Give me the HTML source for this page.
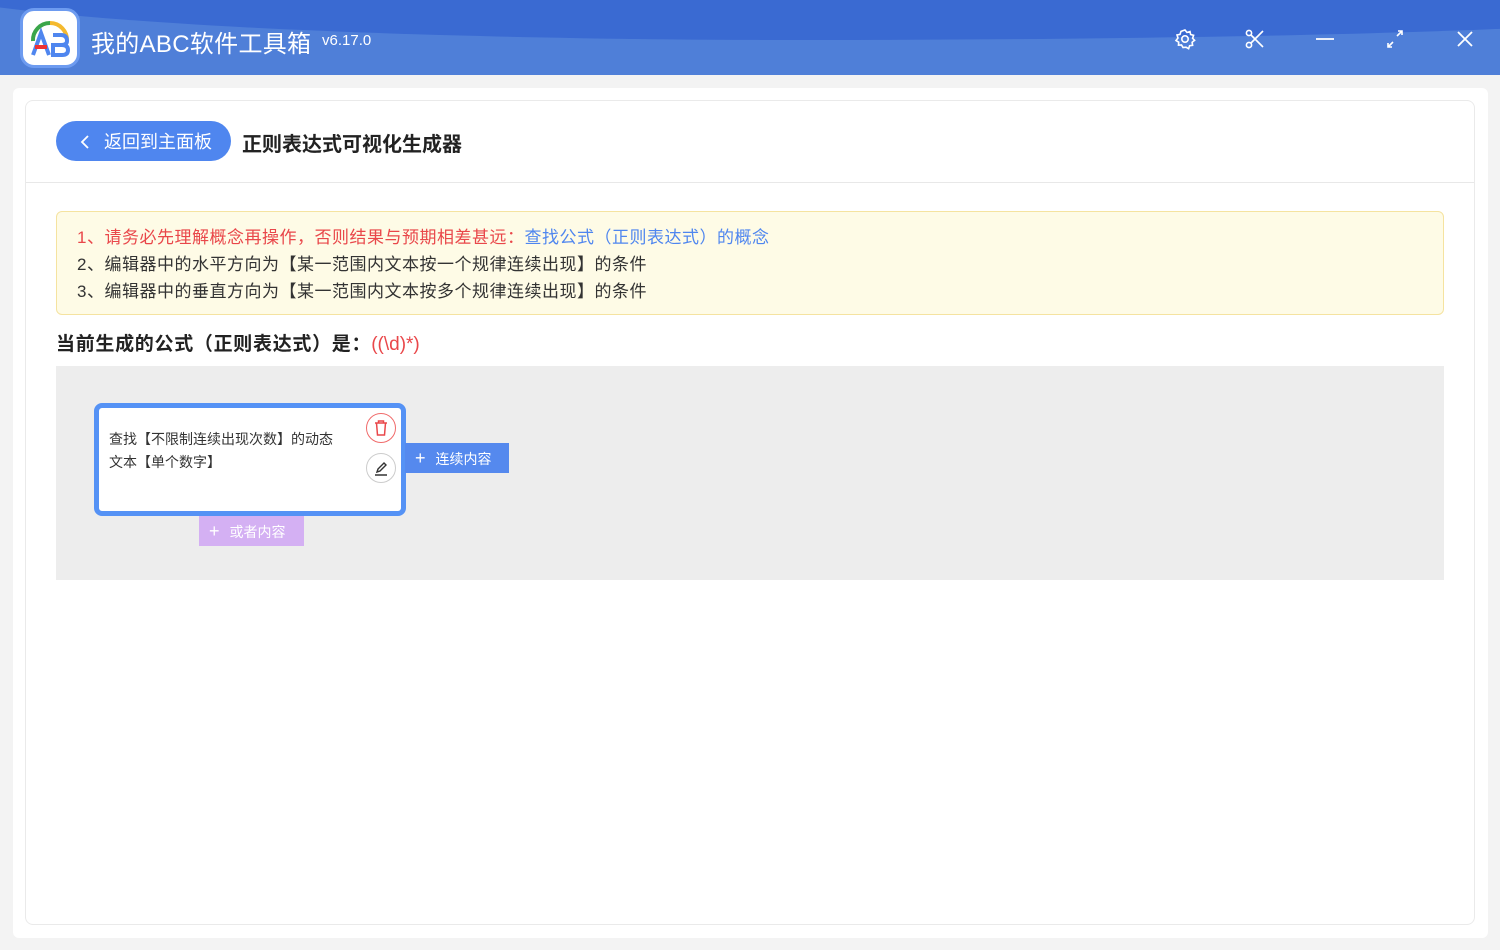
<!DOCTYPE html>
<html><head><meta charset="utf-8"><style>
*{margin:0;padding:0;box-sizing:border-box}
body{width:1500px;height:950px;background:#f3f3f3;font-family:"Liberation Sans","Noto Sans CJK SC",sans-serif;position:relative;overflow:hidden}
.hdr{position:absolute;left:0;top:0;width:1500px;height:75px;background:#4f7fd8;overflow:hidden}
.hdr .wave{position:absolute;left:-100px;top:-60px;width:1800px;height:100px;background:#3a6ad2;border-radius:0 0 50% 50%/0 0 30% 60%}
.logo{position:absolute;left:20px;top:8px;width:60px;height:60px;border-radius:14px;background:#fff;border:3px solid #6d9bf0}
.title{position:absolute;left:91px;top:24px;color:#fff;font-size:24px;letter-spacing:0.3px}
.ver{position:absolute;left:322px;top:32px;color:#fff;font-size:15px}
.ic{position:absolute;top:28px}
.card{position:absolute;left:13px;top:88px;width:1475px;height:850px;background:#fff;border-radius:6px}
.inner{position:absolute;left:25px;top:100px;width:1450px;height:825px;border:1px solid #eaeaea;border-radius:8px;background:#fff}
.back{position:absolute;left:56px;top:121px;width:175px;height:40px;border-radius:20px;background:#4f86ef;color:#fff;font-size:18px;line-height:42px;padding-left:48px}
.h1{position:absolute;left:242px;top:128px;font-size:20px;font-weight:bold;color:#222}
.line{position:absolute;left:26px;top:182px;width:1448px;height:1px;background:#e8e8e8}
.note{position:absolute;left:56px;top:211px;width:1388px;height:104px;background:#fefbe6;border:1px solid #f5e3a0;border-radius:6px;padding:12px 0 0 20px;font-size:17px;line-height:27px;color:#333;letter-spacing:0.5px}
.cur{position:absolute;left:56px;top:329px;font-size:19px;font-weight:bold;color:#222;letter-spacing:0.7px}
.canvas{position:absolute;left:56px;top:366px;width:1388px;height:214px;background:#ededed}
.node{position:absolute;left:94px;top:403px;width:312px;height:113px;border:5px solid #5592f5;border-radius:8px;background:#fff;padding:20px 64px 0 10px;font-size:14px;line-height:23px;color:#333}
.cb{position:absolute;width:30px;height:30px;border-radius:50%;background:#fff}
.btn{position:absolute;height:30px;color:#fff;font-size:14px;line-height:30px}
</style></head><body>
<div class="hdr"><div class="wave"></div>
<div class="logo"><svg width="54" height="54" viewBox="0 0 54 54"><path d="M10 30 A17 17 0 0 1 27 12" stroke="#3aa64a" stroke-width="4" fill="none"/><path d="M27 12 A17 17 0 0 1 44 30" stroke="#f4b92e" stroke-width="4" fill="none"/><path d="M10 44 L18 22 L26 44" stroke="#4f86ef" stroke-width="4" fill="none"/><path d="M12 36 H24" stroke="#e33" stroke-width="4"/><path d="M30 24 H38 Q44 24 44 30 Q44 34 38 34 H30 M30 34 H39 Q45 34 45 39 Q45 44 39 44 H30 Z" stroke="#4f86ef" stroke-width="4" fill="none"/></svg></div>
<div class="title">我的ABC软件工具箱</div><div class="ver">v6.17.0</div>
<svg class="ic" style="left:1174px" width="22" height="22" viewBox="0 0 22 22" fill="none" stroke="#fff" stroke-width="1.6"><path d="M11 2 l2 2.5 3-1 .6 3 3 .8-1 3 2 2-2.5 2 .5 3-3 .4-1 3-2.6-1.5L9 19.5 7.5 17l-3 .2.2-3L2 12.5 4 10 3 7l3-.6 1-3z"/><circle cx="11" cy="11" r="3.2"/></svg>
<svg class="ic" style="left:1245px" width="20" height="22" viewBox="0 0 20 22" fill="none" stroke="#fff" stroke-width="1.6"><circle cx="4" cy="5" r="2.6"/><circle cx="4" cy="17" r="2.6"/><path d="M6 7 L18 19 M6 15 L18 3"/></svg>
<svg class="ic" style="left:1316px" width="18" height="22"><path d="M0 11 H18" stroke="#fff" stroke-width="1.8"/></svg>
<svg class="ic" style="left:1386px" width="18" height="22" viewBox="0 0 18 22" fill="none" stroke="#fff" stroke-width="1.6"><path d="M2 19 L7 14 M11 8 L16 3 M12 3 H16 V7 M2 15 V19 H6"/></svg>
<svg class="ic" style="left:1456px" width="18" height="22" viewBox="0 0 18 22" stroke="#fff" stroke-width="1.8"><path d="M2 4 L16 18 M16 4 L2 18"/></svg>
</div>
<div class="card"></div><div class="inner"></div>
<div class="back"><svg style="position:absolute;left:24px;top:14px" width="10" height="14"><path d="M8 1 L2 7 L8 13" stroke="#fff" stroke-width="1.8" fill="none"/></svg>返回到主面板</div>
<div class="h1">正则表达式可视化生成器</div>
<div class="line"></div>
<div class="note"><div style="color:#e9474a">1、请务必先理解概念再操作，否则结果与预期相差甚远：<span style="color:#4f86ef">查找公式（正则表达式）的概念</span></div><div>2、编辑器中的水平方向为【某一范围内文本按一个规律连续出现】的条件</div><div>3、编辑器中的垂直方向为【某一范围内文本按多个规律连续出现】的条件</div></div>
<div class="cur">当前生成的公式（正则表达式）是：<span style="color:#e9474a;font-weight:normal;letter-spacing:0">((\d)*)</span></div>
<div class="canvas"></div>
<div class="node">查找【不限制连续出现次数】的动态文本【单个数字】</div>
<div class="cb" style="left:366px;top:413px;border:1px solid #f06b6b"><svg width="28" height="28" viewBox="0 0 28 28" fill="none" stroke="#e9474a" stroke-width="1.5"><path d="M8 9 H20 M11.5 9 V7 H16.5 V9 M9.5 9 L10.5 21 H17.5 L18.5 9"/></svg></div>
<div class="cb" style="left:366px;top:453px;border:1px solid #ccc"><svg width="28" height="28" viewBox="0 0 28 28" fill="none" stroke="#333" stroke-width="1.4"><path d="M10 18 L11 15 L17 9 L19 11 L13 17 Z M8 21 H20"/></svg></div>
<div class="btn" style="left:405px;top:443px;width:104px;background:#5589ee;padding-left:10px"><span style="font-size:18px;margin-right:10px">+</span>连续内容</div>
<div class="btn" style="left:199px;top:516px;width:105px;background:#d4b0f3;padding-left:10px"><span style="font-size:18px;margin-right:10px">+</span>或者内容</div>
</body></html>
